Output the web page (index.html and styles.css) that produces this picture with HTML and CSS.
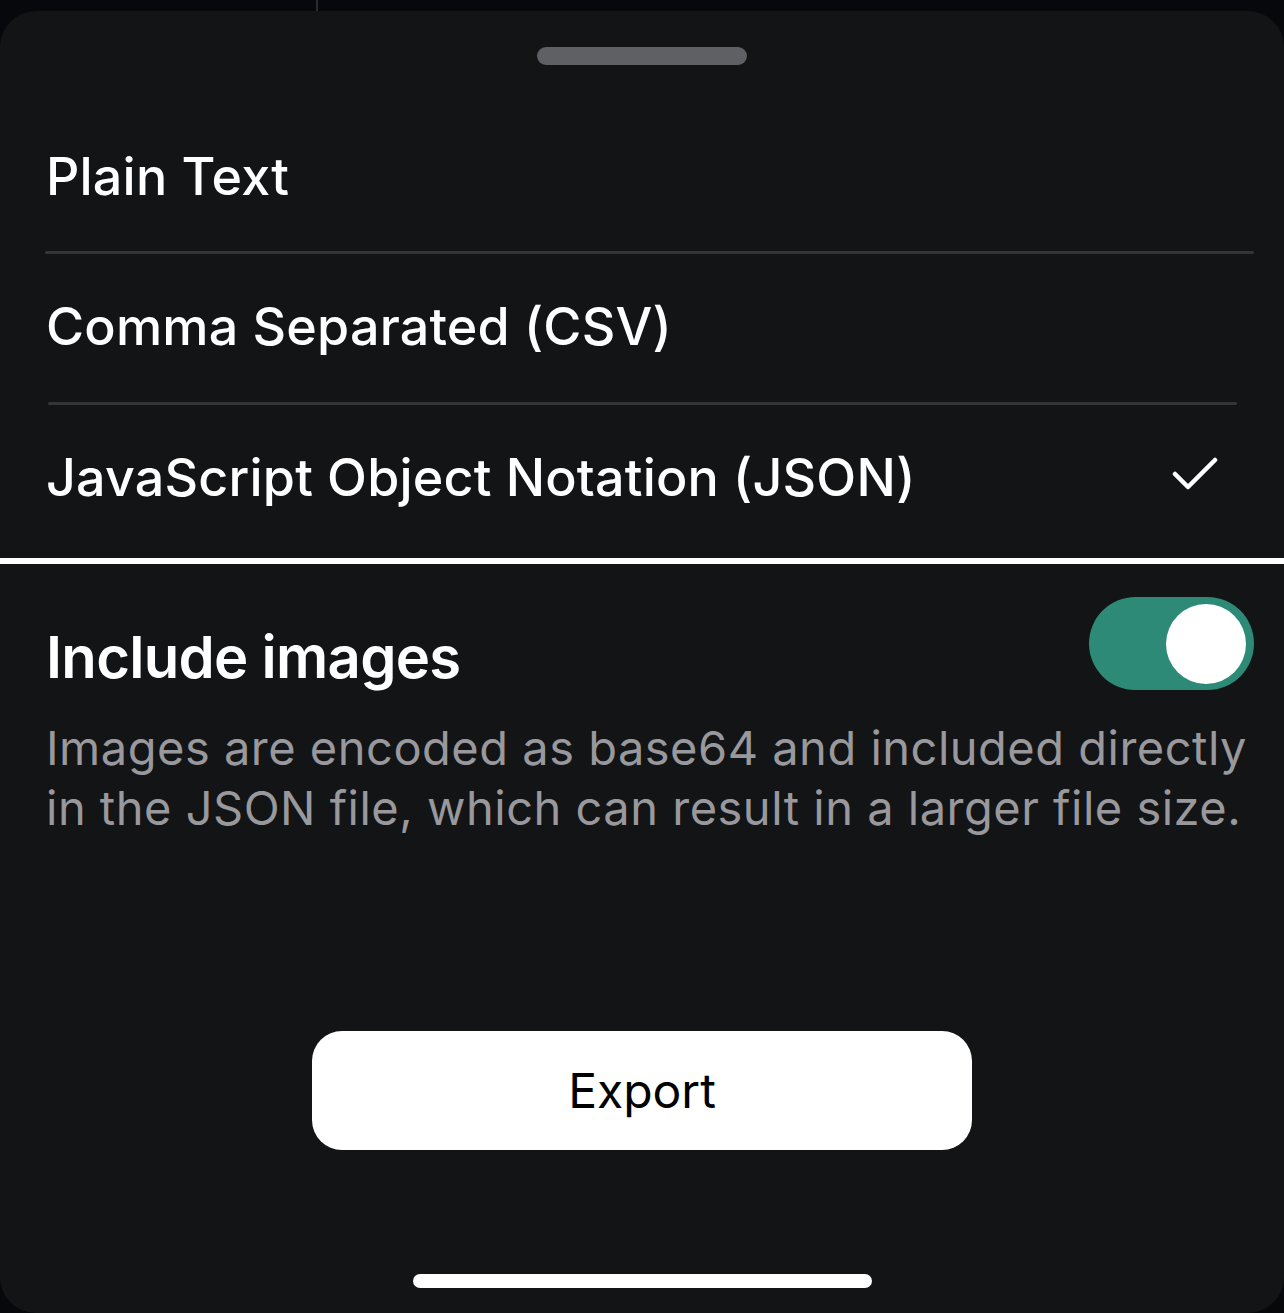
FILE: index.html
```html
<!DOCTYPE html>
<html lang="en">
<head>
  <meta charset="UTF-8" />
  <meta name="viewport" content="width=device-width, initial-scale=1.0" />
  <title>Export</title>
  <link rel="stylesheet" href="styles.css">
</head>
<body>
  <div class="backdrop">
    <div class="backdrop-line"></div>
  </div>

  <div class="sheet">
    <div class="grabber"></div>

    <div class="formats">
      <div class="format-row row-first">Plain Text</div>
      <div class="divider"></div>
      <div class="format-row row-mid">Comma Separated (CSV)</div>
      <div class="divider divider-short"></div>
      <div class="format-row row-selected">
        <span>JavaScript Object Notation (JSON)</span>
        <svg class="check" width="48" height="40" viewBox="0 0 48 40">
          <path d="M3 18 L16 31 L43 4" fill="none" stroke="#fff" stroke-width="4.5" stroke-linecap="round" stroke-linejoin="round" />
        </svg>
      </div>
    </div>
    <div class="selected-bar"></div>

    <div class="option">
      <div class="option-head">
        <div class="option-title">Include images</div>
        <div class="toggle">
          <div class="knob"></div>
        </div>
      </div>
      <p class="option-desc">Images are encoded as base64 and included directly<br>in the JSON file, which can result in a larger file size.</p>
    </div>

    <div class="actions">
      <button class="export-btn">Export</button>
    </div>

    <div class="home-indicator"></div>
  </div>
</body>
</html>
```

FILE: styles.css
```css
* {
  margin: 0;
  padding: 0;
  box-sizing: border-box;
}

body {
  font-family: 'Inter', 'Roboto', sans-serif;
  background: #07080b;
  color: white;
  width: 1284px;
  height: 1313px;
  overflow: hidden;
  position: relative;
}

/* the screen behind the sheet */
.backdrop {
  height: 11px;
  position: relative;
}

.backdrop-line {
  position: absolute;
  left: 316px;
  top: 0;
  width: 2px;
  height: 11px;
  background: #2a2b2e;
}

.sheet {
  height: 1302px;
  background: #131416;
  border-radius: 36px;
  display: flex;
  flex-direction: column;
}

.grabber {
  width: 210px;
  height: 18px;
  border-radius: 9px;
  background: #5f6063;
  margin: 36px auto 0;
}

.formats {
  margin-top: 37px;
}

.format-row {
  height: 148px;
  padding: 0 64px 0 46px;
  display: flex;
  align-items: center;
  justify-content: space-between;
  font-size: 52px;
  font-weight: 500;
  letter-spacing: 0.2px;
}

.row-first {
  height: 149px;
}

.row-mid {
  padding-bottom: 3px;
}

.row-selected {
  height: 153px;
  padding-bottom: 8px;
}

.check {
  margin-top: -4px;
}

.divider {
  height: 3px;
  background: #343538;
  margin: 0 30px 0 45px;
  border-radius: 2px;
}

.divider-short {
  margin: 0 47px 0 48px;
}

.selected-bar {
  height: 6px;
  background: #ffffff;
}

.option {
  padding: 33px 30px 0 46px;
}

.option-head {
  display: flex;
  justify-content: space-between;
  align-items: flex-start;
}

.option-title {
  margin-top: 24px;
  font-size: 58px;
  line-height: 72px;
  font-weight: 600;
  letter-spacing: -0.7px;
}

.toggle {
  width: 165px;
  height: 93px;
  border-radius: 47px;
  background: #2d8a77;
  display: flex;
  align-items: center;
  justify-content: flex-end;
  padding-right: 8px;
}

.knob {
  width: 80px;
  height: 80px;
  border-radius: 50%;
  background: #ffffff;
}

.option-desc {
  margin-top: 25px;
  font-size: 47px;
  line-height: 60px;
  color: #98989d;
  letter-spacing: 0.5px;
  white-space: nowrap;
}

.actions {
  display: flex;
  justify-content: center;
  margin-top: 193px;
}

.export-btn {
  width: 660px;
  height: 119px;
  border: none;
  border-radius: 30px;
  background: #ffffff;
  color: #000000;
  font-family: 'Inter', 'Roboto', sans-serif;
  font-size: 48px;
  font-weight: 400;
}

.home-indicator {
  width: 459px;
  height: 14px;
  border-radius: 7px;
  background: #ffffff;
  margin: 124px auto 0;
}
```
